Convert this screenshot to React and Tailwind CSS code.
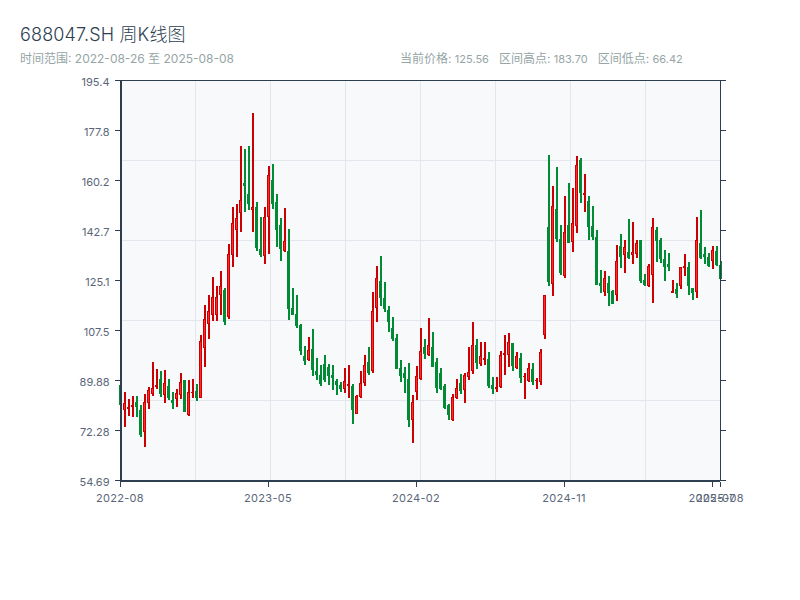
const F = "Inter, 'Noto Sans CJK SC', sans-serif";
const groups = [
  [300, 3, `g 255 255 315 315,r 276 310 330 380,r 297 322 326 347,r 288 316 322 350,g 288 306 322 350,g 315 330 405 410,r 282 306 395 440,r 261 270 308 326,r 186 265 282 287,r 207 255 260 267,g 213 237 282 290,r 210 250 285 308,g 237 258 295 300,g 276 300 308 326,r 267 280 298 320,r 219 246 285 297,g 240 240 335 335,r 240 276 345 347,r 237 276 280 293,g 252 273 293 302,r 105 123 293 293,r 15 57 145 200`],
  [0, 1, `r 295 311 324 339,r 277 297 315 321,r 286 297 315 321,r 271 286 295 315,g 288 290 322 325,r 244 254 317 319,r 207 223 255 267,r 204 218 230 257,r 146 200 213 232,g 149 183 186 212,g 146 194 204 210,r 113 207 210 232,g 202 207 248 251,g 217 249 255 257,r 207 217 256 264,r 166 175 217 254,g 164 180 204 209,g 194 202 230 247,g 218 225 249 261,r 208 241 251 252,g 229 251 309 320,g 288 308 315 315,g 295 314 326 328,g 324 325 351 355,g 346 356 361 365,r 337 350 360 361`],
  [240, 3, `g 267 327 390 408,g 354 393 405 420,g 375 405 432 438,g 345 372 420 426,g 372 381 408 435,g 375 405 415 450,g 417 423 435 465,g 426 435 447 456,r 384 423 447 459,r 375 432 437 474,g 432 438 510 552,r 465 468 522 522,r 393 430 470 474,r 345 375 429 438,g 321 366 399 405,r 156 213 393 399,r 78 114 204 246,g 48 123 174 198,g 126 174 207 216,g 198 210 246 276,g 231 264 297 303,g 282 294 387 387,g 360 384 408 426,g 381 399 414 459,g 369 417 540 561,r 465 486 540 609,r 378 408 456 480,r 264 333 417 420,g 297 321 342 357,r 234 315 345 348,g 276 321 381 381,g 354 366 444 459,g 384 399 447 450,g 432 438 504 507,g 492 495 525 540,r 462 471 540 543,r 417 444 474 477,g 402 429 453 462,r 399 405 450 489,r 321 396 411 420,r 246 315 393 402,g 297 315 369 387,r 306 348 372 378,r 306 354 360 375,g 336 357 438 444,g 411 435 447 462,r 411 441 447 456,r 333 345 441 444,r 285 339 345 405,r 279 306 345 381`],
  [300, 3, `g 129 129 198 213,r 156 168 204 207,g 159 174 234 249,r 219 228 232 297,r 189 204 243 246,g 189 207 246 255,r 234 240 243 267,r 147 156 246 255`],
  [140, 3, `r 465 465 585 597,g 45 261 426 438,r 138 198 432 468,g 81 207 297 306,g 255 297 399 405,r 168 276 408 414,g 129 255 309 309,r 144 249 306 336,r 48 75 258 279,g 54 60 159 189,r 102 159 165 216,g 168 183 261 300,g 198 258 291 300,g 270 291 434 436,g 390 429 437 459,r 393 414 456 468,g 408 429 459 498,g 450 453 492 492,r 315 363 465 483,g 282 318 351 384,r 300 321 345 399,g 237 336 354 357,r 246 336 345 372,r 300 309 342 354,g 300 300 423 429,g 402 420 435 438,r 372 378 438 441,r 234 261 405 489,g 261 270 303 366,g 294 300 357 369,g 330 357 381 423,g 339 372 381 393,r 420 453 458 459,g 429 447 462 474,r 381 381 438 447,r 342 378 384 408,g 366 381 438 465,g 444 444 459 480,r 231 300 456 474,g 210 309 354 357,g 321 342 351 372,g 339 351 378 381,r 318 330 363 387,g 318 333 375 378,g 363 375 417 417`],
];
const candles = groups.flatMap(([base, scale, s]) =>
  s.split(",").map((row) => {
    const [c, ...n] = row.split(" ");
    const [high, top, bottom, low] = n.map((v) => Math.round(base + Number(v) / scale));
    return { red: c === "r", high, top, bottom, low };
  })
);
const RED = "#cc0000", BRIGHT = "#ff2a2a", GREEN = "#008b34", AXIS = "#2c3e50", GRID = "#e3e6ec", LABEL = "#5a6678";
const yLabels = ["195.4", "177.8", "160.2", "142.7", "125.1", "107.5", "89.88", "72.28", "54.69"];
const xTicks = [[120, "2022-08"], [268, "2023-05"], [416, "2024-02"], [564, "2024-11"], [712, "2025-07"], [720, "2025-08"]];
const vGrid = [195, 270, 345, 420, 495, 570, 645];
const hGrid = [160, 240, 320, 400];

function Candle({ d, i }) {
  const x = 120 + 4 * i;
  const col = d.red ? RED : GREEN;
  const h = Math.max(1, d.bottom - d.top);
  return (
    <g>
      <rect x={x} y={d.high} width="2" height={Math.max(1, d.low - d.high)} fill={col} />
      <rect x={x - 1} y={d.top} width="3" height={h} fill={col} />
      {d.red && h > 2 && <rect x={x} y={d.top + 1} width="1" height={h - 2} fill={BRIGHT} />}
    </g>
  );
}

export default function App() {
  return (
    <div className="w-[800px] h-[600px] bg-white overflow-hidden" style={{ fontFamily: F }}>
      <div className="px-5 pt-[24px]">
        <h1 className="text-[18px] leading-[22px] font-light tracking-[0.15px] text-[#2c3e50]">688047.SH 周K线图</h1>
        <div className="grid grid-cols-2 mt-[5px] text-[12px] leading-[16px] text-[#95a5a6]">
          <div>时间范围: 2022-08-26 至 2025-08-08</div>
          <div className="flex gap-[10px]">
            <span>当前价格: <span className="text-[11px]">125.56</span></span>
            <span>区间高点: <span className="text-[11px]">183.70</span></span>
            <span>区间低点: <span className="text-[11px]">66.42</span></span>
          </div>
        </div>
      </div>
      <svg className="block mt-[3px]" width="800" height="450" viewBox="0 70 800 450" shapeRendering="crispEdges">
        <rect x="120" y="80" width="600" height="400" fill="#f8f9fb" />
        {vGrid.map((x) => <rect key={x} x={x} y="80" width="1" height="400" fill={GRID} />)}
        {hGrid.map((y) => <rect key={y} x="120" y={y} width="600" height="1" fill={GRID} />)}
        {candles.map((d, i) => <Candle key={i} d={d} i={i} />)}
        <rect x="120" y="80" width="600" height="1" fill={AXIS} />
        <rect x="120" y="80" width="2" height="402" fill={AXIS} />
        <rect x="120" y="480" width="600" height="2" fill={AXIS} />
        <rect x="720" y="80" width="1" height="401" fill={AXIS} />
        {yLabels.map((t, i) => (
          <g key={t}>
            <rect x="115" y={80 + 50 * i} width="5" height="1" fill={AXIS} />
            <rect x="721" y={80 + 50 * i} width="5" height="1" fill={AXIS} />
            <text x="109.5" y={86 + 50 * i} textAnchor="end" fontSize="11" fill={LABEL}>{t}</text>
          </g>
        ))}
        {xTicks.map(([x, t]) => (
          <g key={t}>
            <rect x={x} y="482" width="1" height="5" fill={AXIS} />
            <text x={x} y="502" textAnchor="middle" fontSize="11" letterSpacing="0.3" fill={LABEL}>{t}</text>
          </g>
        ))}
      </svg>
    </div>
  );
}
